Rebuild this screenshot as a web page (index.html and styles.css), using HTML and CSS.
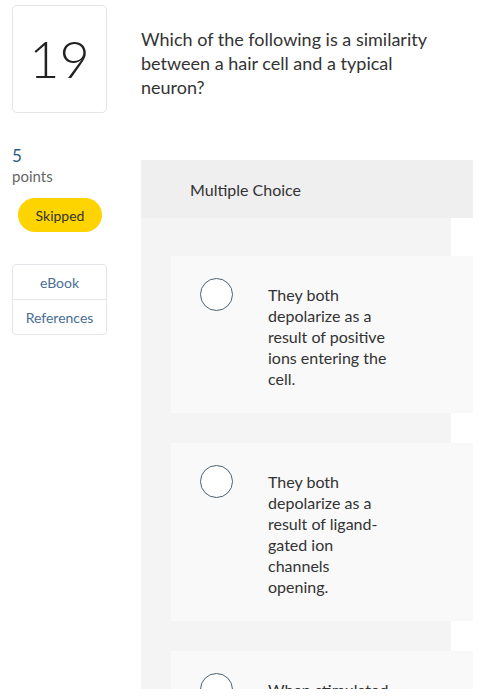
FILE: index.html
```html
<!DOCTYPE html>
<html>
<head>
<meta charset="utf-8">
<link rel="stylesheet" href="styles.css">
</head>
<body>
<div class="page">
  <aside class="side">
    <div class="qnum">19</div>
    <div class="pts">
      <div class="pts-val">5</div>
      <div class="pts-lbl">points</div>
    </div>
    <div class="status">Skipped</div>
    <div class="links">
      <div class="link">eBook</div>
      <div class="link">References</div>
    </div>
  </aside>
  <main class="main">
    <p class="question">Which of the following is a similarity between a hair cell and a typical neuron?</p>
    <section class="panel">
      <div class="panel-head">Multiple Choice</div>
      <div class="panel-body">
        <div class="choice">
          <span class="radio"></span>
          <span class="choice-text">They both depolarize as a result of positive ions entering the cell.</span>
        </div>
        <div class="choice">
          <span class="radio"></span>
          <span class="choice-text">They both depolarize as a result of ligand-gated ion channels opening.</span>
        </div>
        <div class="choice">
          <span class="radio"></span>
          <span class="choice-text">When stimulated they both release neurotransmitter.</span>
        </div>
      </div>
    </section>
  </main>
</div>
</body>
</html>
```
FILE: styles.css
```css
* { box-sizing: border-box; }
html, body { margin: 0; padding: 0; background: #fff; }
body {
  font-family: Lato, "Open Sans", sans-serif;
  color: #333;
}
.page {
  display: flex;
  height: 689px;
  overflow: hidden;
  padding: 5px 7px 0 12px;
}
.side {
  width: 95px;
  flex: none;
  display: flex;
  flex-direction: column;
  align-items: stretch;
}
.qnum {
  height: 108px;
  border: 1px solid #e6e6e6;
  border-radius: 5px;
  display: flex;
  align-items: center;
  justify-content: center;
  font-size: 52px;
  font-weight: 300;
  color: #222;
  padding-bottom: 3px;
}
.pts { margin-top: 33px; }
.pts-val {
  font-size: 17px;
  line-height: 20px;
  color: #2d5b84;
}
.pts-lbl {
  font-size: 15px;
  line-height: 20px;
  color: #666;
}
.status {
  margin: 12px 0 0 6px;
  width: 84px;
  height: 34px;
  border-radius: 17px;
  background: #fdd400;
  display: flex;
  align-items: center;
  justify-content: center;
  font-size: 14px;
  color: #333;
}
.links {
  margin-top: 32px;
  border: 1px solid #e3e6ea;
  border-radius: 4px;
}
.link {
  height: 34px;
  display: flex;
  align-items: center;
  justify-content: center;
  font-size: 14px;
  color: #4a6d94;
}
.link + .link { border-top: 1px solid #e3e6ea; height: 35px; }
.main {
  margin-left: 34px;
  width: 332px;
  flex: none;
}
.question {
  margin: 22px 0 0;
  max-width: 300px;
  font-size: 18px;
  line-height: 24px;
  color: #333;
}
.panel { margin-top: 61px; }
.panel-head {
  height: 58px;
  background: #efefef;
  display: flex;
  align-items: center;
  padding-left: 49px;
  font-size: 16px;
  color: #333;
}
.panel-body {
  background: #f4f4f4;
  margin-right: 22px;
  padding: 38px 0 30px 30px;
  display: flex;
  flex-direction: column;
  gap: 30px;
}
.choice {
  margin-right: -22px;
  background: #f9f9f9;
  padding: 22px 0 24px 29px;
  display: flex;
  align-items: flex-start;
}
.radio {
  width: 33px;
  height: 33px;
  border: 1.5px solid #4a6174;
  border-radius: 50%;
  background: #fff;
  flex: none;
}
.choice-text {
  margin-left: 35px;
  width: 123.5px;
  padding-top: 6px;
  font-size: 16px;
  line-height: 21px;
  color: #333;
}
```
